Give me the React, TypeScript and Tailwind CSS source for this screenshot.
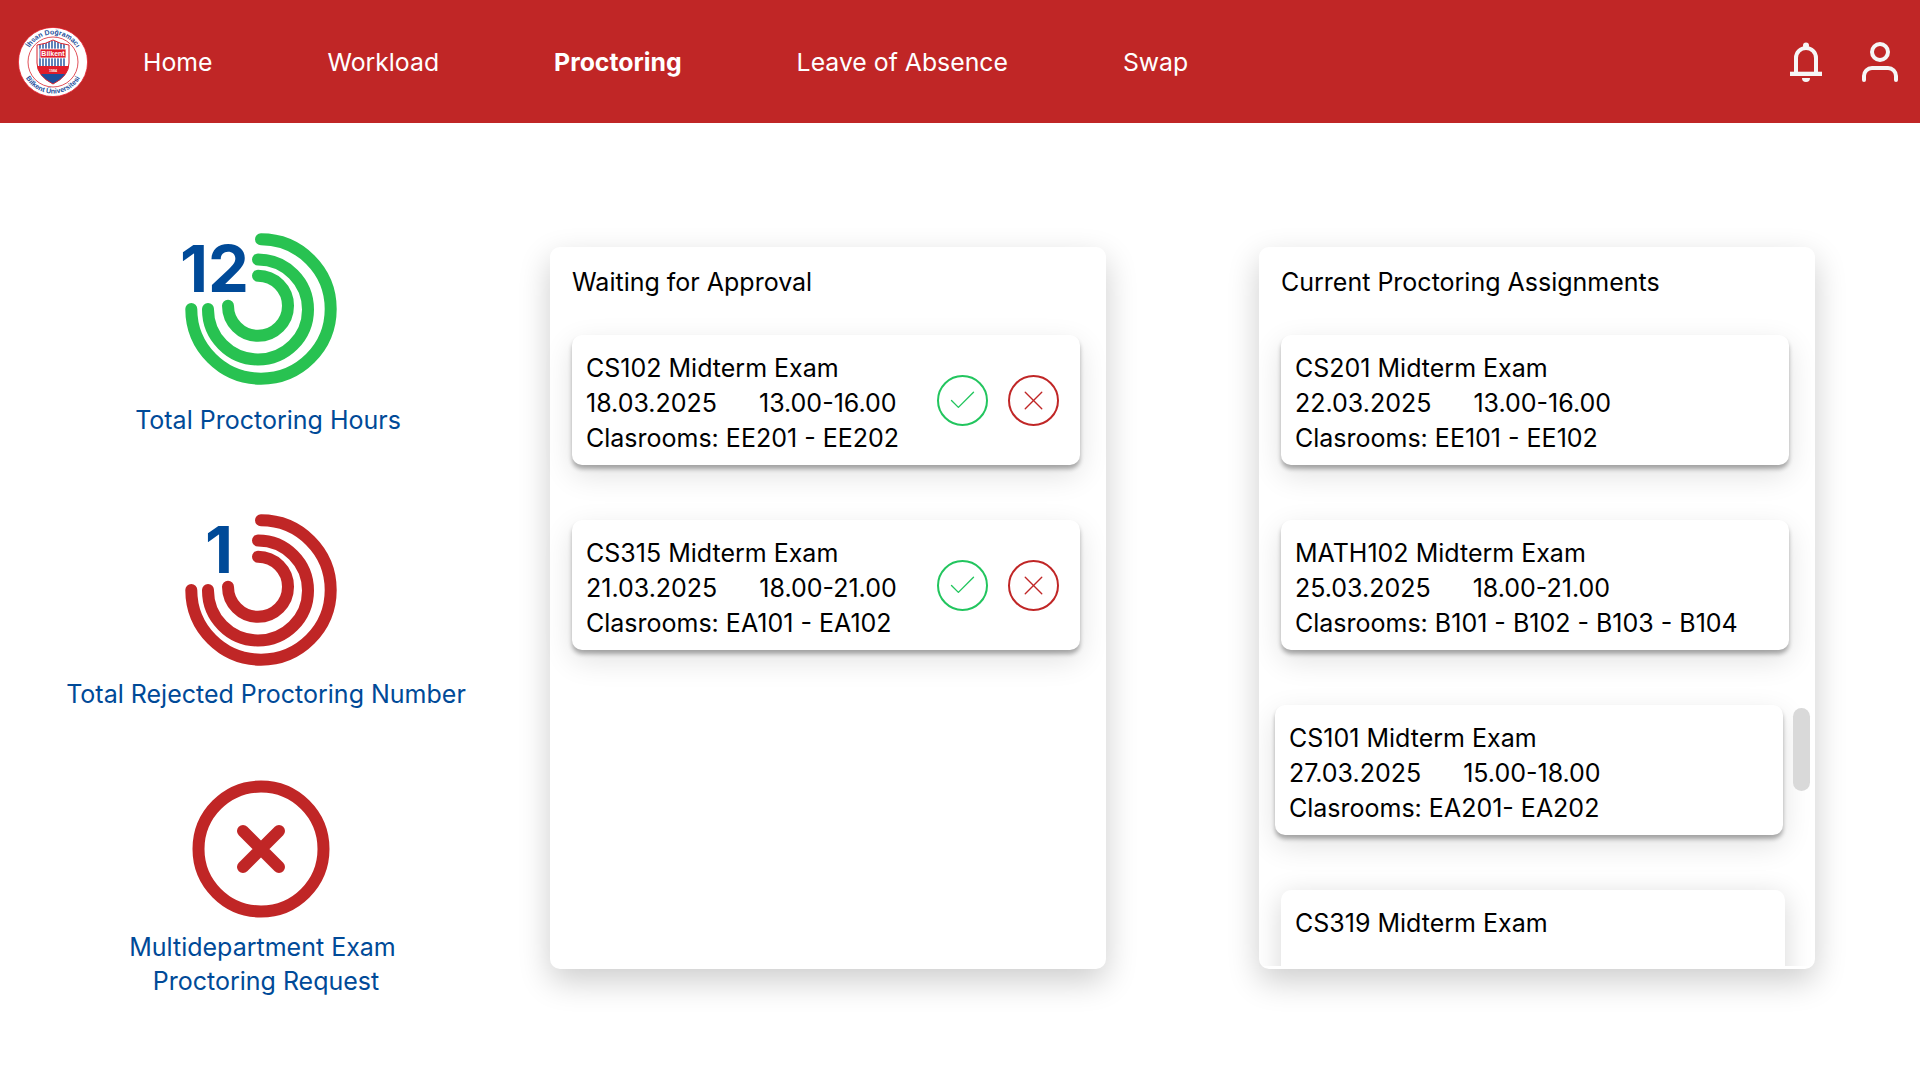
import { Check, X } from 'lucide-react'

const navItems = ['Home', 'Workload', 'Proctoring', 'Leave of Absence', 'Swap']

type Exam = { title: string; date?: string; time?: string; rooms?: string; hovered?: boolean; narrow?: boolean }

const waiting: Exam[] = [
  { title: 'CS102 Midterm Exam', date: '18.03.2025', time: '13.00-16.00', rooms: 'Clasrooms: EE201 - EE202' },
  { title: 'CS315 Midterm Exam', date: '21.03.2025', time: '18.00-21.00', rooms: 'Clasrooms: EA101 - EA102' },
]

const assignments: Exam[] = [
  { title: 'CS201 Midterm Exam', date: '22.03.2025', time: '13.00-16.00', rooms: 'Clasrooms: EE101 - EE102' },
  { title: 'MATH102 Midterm Exam', date: '25.03.2025', time: '18.00-21.00', rooms: 'Clasrooms: B101 - B102 - B103 - B104' },
  { title: 'CS101 Midterm Exam', date: '27.03.2025', time: '15.00-18.00', rooms: 'Clasrooms: EA201- EA202', hovered: true },
  { title: 'CS319 Midterm Exam', narrow: true },
]

function Logo() {
  return (
    <svg width="70" height="70" viewBox="0 0 70 70" className="shrink-0">
      <defs>
        <path id="logoTop" d="M7.5 35a27.5 27.5 0 0 1 55 0" />
        <path id="logoBottom" d="M3.5 35a31.5 31.5 0 0 0 63 0" />
        <clipPath id="shieldClip">
          <path d="M19 18q9-1 16-5q7 4 16 5v18q0 13-16 21q-16-8-16-21z" />
        </clipPath>
      </defs>
      <circle cx="35" cy="35" r="34.6" fill="#fff" stroke="#e11d2a" strokeWidth="0.8" />
      <circle cx="35" cy="35" r="25" fill="#fff" stroke="#d8232f" strokeWidth="0.8" />
      <text fill="#1d4f9c" fontFamily="Liberation Sans, sans-serif" fontSize="7" fontWeight="700">
        <textPath href="#logoTop" startOffset="50%" textAnchor="middle">İhsan Doğramacı</textPath>
      </text>
      <text fill="#1d4f9c" fontFamily="Liberation Sans, sans-serif" fontSize="7" fontWeight="700">
        <textPath href="#logoBottom" startOffset="50%" textAnchor="middle">Bilkent Üniversitesi</textPath>
      </text>
      <g clipPath="url(#shieldClip)">
        <rect x="18" y="12" width="34" height="46" fill="#fff" />
        <path d="M22 14v30M25 14v30M28 14v30M31 14v30M34 14v30M37 14v30M40 14v30M43 14v30M46 14v30" stroke="#1d4f9c" strokeWidth="1.4" />
        <path d="M25 48q10-16 20 0z" fill="#fff" />
        <rect x="18" y="39" width="34" height="8" fill="#e11d2a" />
        <rect x="18" y="47" width="34" height="12" fill="#1d4f9c" />
      </g>
      <path d="M19 18q9-1 16-5q7 4 16 5v18q0 13-16 21q-16-8-16-21z" fill="none" stroke="#d8232f" strokeWidth="1" />
      <rect x="22" y="22" width="26" height="9" fill="#e11d2a" stroke="#fff" strokeWidth="0.8" />
      <text x="35" y="29.2" textAnchor="middle" fill="#fff" fontFamily="Liberation Sans, sans-serif" fontSize="7" fontWeight="700">Bilkent</text>
      <text x="35" y="45" textAnchor="middle" fill="#fff" fontFamily="Liberation Sans, sans-serif" fontSize="3.6" fontWeight="700">1984</text>
    </svg>
  )
}

function BellIcon() {
  return (
    <svg width="32" height="40" viewBox="0 0 32 40" fill="none" className="shrink-0">
      <circle cx="16" cy="3.5" r="3" fill="#f6f6f6" />
      <path d="M6 30V16a10 10 0 0 1 20 0v14" stroke="#f6f6f6" strokeWidth="4" />
      <rect x="0" y="29.7" width="32" height="4.3" fill="#f6f6f6" />
      <path d="M12 36h8a4 4 0 0 1-8 0z" fill="#f6f6f6" />
    </svg>
  )
}

function UserIcon() {
  return (
    <svg width="40" height="44" viewBox="0 0 40 44" fill="none" className="shrink-0">
      <circle cx="20" cy="12" r="8" stroke="#f6f6f6" strokeWidth="4" />
      <path d="M4 40v-4a8 8 0 0 1 8-8h16a8 8 0 0 1 8 8v4" stroke="#f6f6f6" strokeWidth="4" strokeLinecap="round" />
    </svg>
  )
}

function Rings({ color, value, valueClass }: { color: string; value: string; valueClass: string }) {
  return (
    <div className="relative w-[160px] h-[160px] mr-[10px]">
      <svg width="160" height="160" viewBox="0 0 160 160" fill="none" stroke={color} strokeWidth="12" strokeLinecap="round">
        <path d="M80 10.3A69.7 69.7 0 1 1 10.3 80" />
        <path d="M77 30.5A50 50 0 1 1 27 80" />
        <path d="M77 46.8A30 30 0 1 1 47 76.8" />
      </svg>
      <span className={`absolute font-bold text-[65px] leading-[65px] text-[#004a98] ${valueClass}`}>{value}</span>
    </div>
  )
}

function RejectIcon() {
  return (
    <svg width="160" height="160" viewBox="0 0 160 160" fill="none" stroke="#c02626" className="mr-[10px]">
      <circle cx="80" cy="80" r="62.5" strokeWidth="12" />
      <path d="M62 62l36 36M98 62l-36 36" strokeWidth="12" strokeLinecap="round" />
    </svg>
  )
}

function ExamCard({ exam, actions }: { exam: Exam; actions?: boolean }) {
  return (
    <div
      className={`flex items-center justify-between shrink-0 h-[130px] rounded-[10px] bg-white pl-[14px] pr-[21px] ${
        exam.narrow ? 'w-[504px] shadow-[0_6px_28px_rgba(0,0,0,0.16)]' : 'shadow-[0_4px_4px_rgba(0,0,0,0.3),0_10px_30px_rgba(0,0,0,0.12)]'
      } ${exam.hovered ? '-translate-x-[6px] w-[508px]' : ''}`}
    >
      <div className="pt-[7px] text-[25px] leading-[35px] text-black">
        <div>{exam.title}</div>
        {exam.date ? (
          <div className="flex gap-[42px]">
            <span>{exam.date}</span>
            <span>{exam.time}</span>
          </div>
        ) : (
          <div>&nbsp;</div>
        )}
        <div>{exam.rooms ?? '\u00a0'}</div>
      </div>
      {actions && (
        <div className="flex gap-[20px]">
          <button className="flex items-center justify-center w-[51px] h-[51px] rounded-full border-2 border-[#22c55e] text-[#22c55e]">
            <Check size={33} strokeWidth={1} />
          </button>
          <button className="flex items-center justify-center w-[51px] h-[51px] rounded-full border-2 border-[#c02626] text-[#c02626]">
            <X size={33} strokeWidth={1} />
          </button>
        </div>
      )}
    </div>
  )
}

function Panel({ title, children }: { title: string; children: React.ReactNode }) {
  return (
    <section className="relative w-[556px] h-[722px] rounded-[10px] bg-white pt-[18px] shadow-[0_12px_32px_rgba(0,0,0,0.2)]">
      <h2 className="px-[22px] text-[25px] leading-[35px] font-normal text-black">{title}</h2>
      {children}
    </section>
  )
}

export default function App() {
  return (
    <div className="min-h-[1080px] bg-white overflow-hidden font-['Inter',sans-serif]">
      <header className="flex items-center justify-between h-[123px] bg-[#c02626] pl-[18px] pr-[20px]">
        <div className="flex items-center gap-[55px]">
          <Logo />
          <nav className="flex gap-[115px] pt-[3px] text-[24.8px] text-white">
            {navItems.map((item) => (
              <a key={item} className={item === 'Proctoring' ? 'font-bold' : ''}>{item}</a>
            ))}
          </nav>
        </div>
        <div className="flex items-center gap-[38px]">
          <BellIcon />
          <UserIcon />
        </div>
      </header>

      <main className="flex">
        <aside className="flex flex-col items-center w-[532px] mr-[18px] pt-[106px] text-[25px] leading-[34px] text-[#004a98]">
          <Rings color="#28c251" value="12" valueClass="left-[-1px] top-[7px]" />
          <p className="mt-[14px] ml-[4px]">Total Proctoring Hours</p>
          <div className="mt-[73px]">
            <Rings color="#c02626" value="1" valueClass="left-[24px] top-[7px]" />
          </div>
          <p className="mt-[7px]">Total Rejected Proctoring Number</p>
          <div className="mt-[58px]">
            <RejectIcon />
          </div>
          <p className="mt-[1px] text-center">Multidepartment Exam{'\u00a0'}<br />Proctoring Request</p>
        </aside>

        <div className="flex gap-[153px] pt-[124px]">
          <Panel title="Waiting for Approval">
            <div className="flex flex-col gap-[55px] pl-[22px] pr-[26px] pt-[35px]">
              {waiting.map((exam) => (
                <ExamCard key={exam.title} exam={exam} actions />
              ))}
            </div>
          </Panel>
          <Panel title="Current Proctoring Assignments">
            <div className="flex flex-col gap-[55px] h-[666px] overflow-hidden pl-[22px] pr-[26px] pt-[35px]">
              {assignments.map((exam) => (
                <ExamCard key={exam.title} exam={exam} />
              ))}
            </div>
            <div className="absolute right-[5px] top-[461px] w-[17px] h-[83px] rounded-full bg-[#d9d9d9]" />
          </Panel>
        </div>
      </main>
    </div>
  )
}
